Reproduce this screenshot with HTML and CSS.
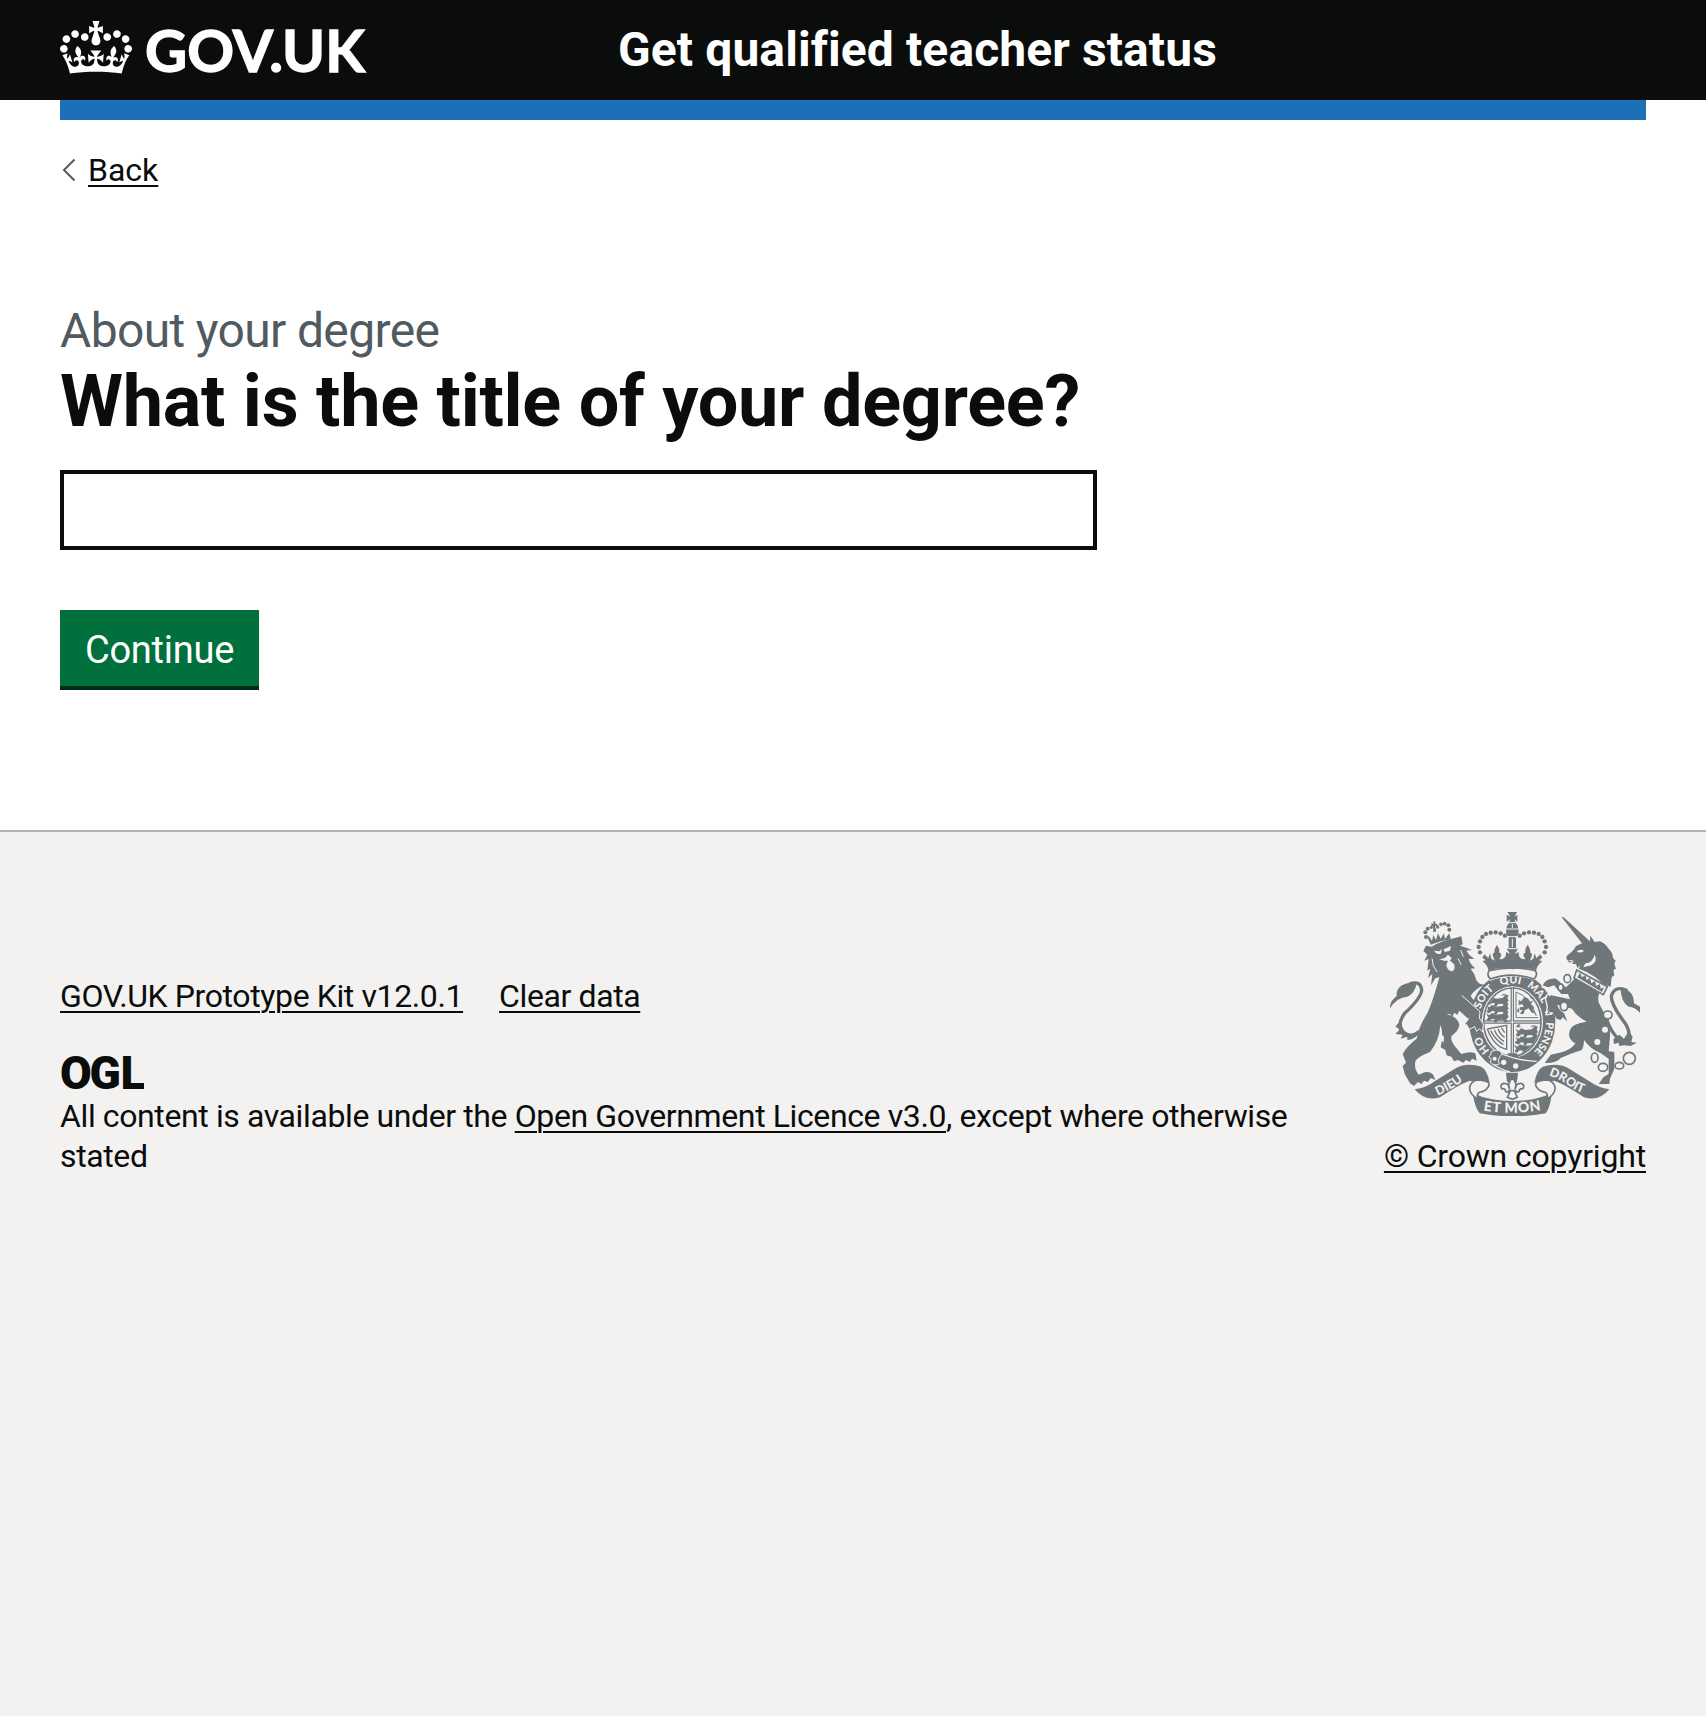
FILE: index.html
```html
<!DOCTYPE html>
<html lang="en">
<head>
<meta charset="utf-8">
<title>What is the title of your degree?</title>
<link rel="stylesheet" href="styles.css">
</head>
<body>
<header class="header">
  <div class="container header-inner">
    <a class="brand" href="#">
      <svg class="crown" viewBox="0 0 132 97" aria-hidden="true"><path fill="currentColor" fill-rule="evenodd" d="M25 30.2c3.5 1.5 7.7-.2 9.1-3.7 1.5-3.6-.2-7.8-3.9-9.2-3.6-1.4-7.6.3-9.1 3.9-1.4 3.5.3 7.5 3.9 9zM9 39.5c3.6 1.5 7.8-.2 9.2-3.7 1.5-3.6-.2-7.8-3.9-9.1-3.6-1.5-7.6.2-9.1 3.8-1.4 3.5.3 7.5 3.8 9zM4.4 57.2c3.5 1.5 7.7-.2 9.1-3.8 1.5-3.6-.2-7.7-3.9-9.1-3.5-1.5-7.6.3-9.1 3.8-1.4 3.5.3 7.6 3.9 9.1zm38.3-21.4c3.5 1.5 7.7-.2 9.1-3.8 1.5-3.6-.2-7.7-3.9-9.1-3.6-1.5-7.6.3-9.1 3.8-1.3 3.6.4 7.7 3.9 9.1zm64.4-5.6c-3.6 1.5-7.8-.2-9.1-3.7-1.5-3.6.2-7.8 3.8-9.2 3.6-1.4 7.7.3 9.2 3.9 1.3 3.5-.4 7.5-3.9 9zm15.9 9.3c-3.6 1.5-7.7-.2-9.1-3.7-1.5-3.6.2-7.8 3.7-9.1 3.6-1.5 7.7.2 9.2 3.8 1.5 3.5-.3 7.5-3.8 9zm4.7 17.7c-3.6 1.5-7.8-.2-9.2-3.8-1.5-3.6.2-7.7 3.9-9.1 3.6-1.5 7.7.3 9.2 3.8 1.3 3.5-.4 7.6-3.9 9.1zM89.3 35.8c-3.6 1.5-7.8-.2-9.2-3.8-1.4-3.6.2-7.7 3.9-9.1 3.6-1.5 7.7.3 9.2 3.8 1.4 3.6-.3 7.7-3.9 9.1zM69.7 17.7l8.9 4.7V9.3l-8.9 2.8c-.2-.3-.5-.6-.9-.9L72.4 0H59.6l3.5 11.2c-.3.3-.6.5-.9.9l-8.8-2.8v13.1l8.8-4.7c.3.3.6.7.9.9l-5 15.4v.1c-.2.8-.4 1.6-.4 2.4 0 4.1 3.1 7.5 7 8.1h.2c.3 0 .7.1 1 .1.4 0 .7 0 1-.1h.2c4-.6 7.1-4.1 7.1-8.1 0-.8-.1-1.7-.4-2.4V34l-5.1-15.4c.4-.2.7-.6 1-.9zM66 92.8c16.9 0 32.8 1.1 47.1 3.2 4-16.9 8.9-26.7 14-33.5l-9.6-3.4c1 4.9 1.1 7.2 0 10.2-1.5-1.4-3-4.3-4.2-8.7L108.6 76c2.8-2 5-3.2 7.5-3.3-4.4 9.4-10 11.9-13.6 11.2-4.3-.8-6.3-4.6-5.6-7.9 1-4.7 5.7-5.9 8-.5 4.3-8.7-3-11.4-7.6-8.8 7.1-7.2 7.9-13.5 2.1-21.1-8 6.1-8.1 12.3-4.5 20.8-4.7-5.4-12.1-2.5-9.5 6.2 3.4-5.2 7.9-2 7.2 3.1-.6 4.3-6.4 7.8-13.5 7.2-10.3-.9-10.9-8-11.2-13.8 2.5-.5 7.1 1.8 11 7.3L80.2 60c-4.1 4.4-8 5.3-12.3 5.4 1.4-4.4 8-11.6 8-11.6H55.5s6.4 7.2 7.9 11.6c-4.2-.1-8-1-12.3-5.4l1.4 16.4c3.9-5.5 8.5-7.7 10.9-7.3-.3 5.8-.9 12.8-11.1 13.8-7.2.6-12.9-2.9-13.5-7.2-.7-5 3.8-8.3 7.1-3.1 2.7-8.7-4.6-11.6-9.4-6.2 3.7-8.5 3.6-14.7-4.6-20.8-5.8 7.6-5 13.9 2.2 21.1-4.7-2.6-11.9.1-7.7 8.8 2.3-5.5 7.1-4.2 8.1.5.7 3.3-1.3 7.1-5.7 7.9-3.5.7-9-1.8-13.5-11.2 2.5.1 4.7 1.3 7.5 3.3l-4.7-15.4c-1.2 4.4-2.7 7.2-4.3 8.7-1.1-3-.9-5.3 0-10.2l-9.5 3.4c5 6.9 9.9 16.7 14 33.5 14.8-2.1 30.8-3.2 47.7-3.2z"/></svg>
      <span class="brand-text">GOV.UK</span>
    </a>
    <a class="service" href="#">Get qualified teacher status</a>
  </div>
</header>
<div class="container page">
  <div class="blue-bar"></div>
  <a class="back" href="#">
    <svg class="chevron" viewBox="0 0 14 24" aria-hidden="true"><path d="M12.500 1.500 2 12l10.500 10.500" fill="none" stroke="#505a5f" stroke-width="2"/></svg>
    <span class="link back-text">Back</span>
  </a>
  <main class="main">
    <span class="caption">About your degree</span>
    <h1 class="heading"><label for="degree">What is the title of your degree?</label></h1>
    <input class="input" id="degree" type="text">
    <button class="button" type="button">Continue</button>
  </main>
</div>
<footer class="footer">
  <div class="container footer-inner">
    <div class="meta">
      <div class="meta-links"><a class="link" href="#">GOV.UK Prototype Kit v12.0.1</a><a class="link" href="#">Clear data</a></div>
      <svg class="ogl" viewBox="0 0 84 36" role="img" aria-label="Open Government Licence"><text class="ogl-text" y="33" x="0 29.500 60.500">OGL</text></svg>
      <p class="licence">All content is available under the <a class="link" href="#">Open Government Licence v3.0</a>, except where otherwise stated</p>
    </div>
    <div class="crest">
      <svg class="arms" viewBox="60 66 750 612" aria-hidden="true">
        <defs>
          <clipPath id="shield"><ellipse cx="427" cy="396" rx="83" ry="99"/></clipPath>
          <path id="ring" d="M427 512A101 116 0 0 1 427 280A101 116 0 0 1 427 512"/>
          <path id="dieu" d="M203 617Q245 598 275 576T320 556"/>
          <path id="mon" d="M340 661Q426 676 520 659"/>
          <path id="droit" d="M536 556Q572 568 600 590T690 618"/>
          <path id="walker" d="M348 322l10 6 8-7 12 5 20-2 8-10 10 2-4 8 4 8-8 10 6 6-10 1-6-8-14 1-5 8-8-2 4-8-10-1-8 7-8-4 6-7zM350 318l4-8 10-2-4 6 6 4M392 318l8-6 12 1"/>
          <g id="halfcrown">
            <g class="f"><circle cx="330" cy="187" r="6.500"/><circle cx="326" cy="171" r="6.500"/><circle cx="330" cy="154" r="6.500"/><circle cx="337" cy="141" r="6.500"/><circle cx="348" cy="132" r="6.500"/><circle cx="362" cy="128" r="6.500"/><circle cx="377" cy="127" r="6.500"/><circle cx="392" cy="130" r="6.500"/><circle cx="405" cy="137" r="6.500"/></g>
            <path class="f" d="M343 193L355 204L360 190L364 206L374 212L368 196Q366 190 373 188Q372 176 381 164Q390 176 388 188Q396 190 393 198L388 208Q408 208 408 192L428 208V238Q390 230 355 241Q354 227 337 213L347 211L337 203Z"/>
          </g>
        </defs>
        <!-- lion -->
        <path class="f" d="M182 164L170 136L179 142L186 153L190 135L198 150L204 130L212 146L222 130L225 147L238 130L242 146V148Q212 152 182 164Z"/>
        <g class="f"><circle cx="168" cy="141" r="6"/><circle cx="166" cy="127" r="6"/><circle cx="173" cy="116" r="6"/><circle cx="184" cy="112" r="5"/><circle cx="203" cy="111" r="5"/><circle cx="213" cy="103" r="5.500"/><circle cx="224" cy="101" r="5.500"/><circle cx="235" cy="106" r="6"/><circle cx="238" cy="119" r="6"/><path d="M184 100L191 101L190 94L197 95L196 102L203 102L201 108L195 108L199 124L190 127L189 109L184 107Z"/></g>
        <path class="o" stroke-width="10" d="M148 424Q120 448 96 426Q80 404 104 370Q156 322 155 298Q150 270 118 282"/>
        <path class="f" d="M60 355Q58 335 80 318Q78 285 118 279L140 280Q134 312 112 320Q80 322 60 355ZM86 398L76 410L90 418L76 432L98 434L92 446L112 440L112 450Q140 448 150 424L126 432Q96 428 95 400Z"/>
        <path class="f" d="M160 183L168 167L185 170Q215 152 252 145L274 139L278 162L270 167Q290 172 306 180L289 182Q297 197 313 207L296 206Q301 224 316 235L302 236Q314 250 320 272L330 282L345 284Q315 295 302 318L336 366L332 384L340 400L338 426L328 416L320 424L314 410L298 418L292 404L284 402L296 388Q290 368 268 362L262 374L252 368L248 380L240 372L230 372Q266 382 268 406Q266 422 245 438Q240 448 254 468L274 492Q300 482 316 490L320 512L306 506L300 516L288 510L280 518L264 510L252 514L244 500L230 496L226 480L212 472Q222 430 211 405Q208 452 180 486Q140 502 136 514Q132 538 146 554L164 547Q190 542 196 570L182 564L174 576L162 572L154 582L144 576L132 588L120 580L104 552L98 528L108 518L98 492Q110 468 140 446Q146 410 172 370Q190 330 208 262L196 265L183 286L187 252L174 264L181 236L172 242L176 207L163 212L172 194Z"/>
        <path class="w" d="M192 182L208 184L216 176L212 192Q200 194 192 182ZM221 178L243 168L240 182L224 186ZM208 208L225 204L234 194L245 204L240 212L252 222Q258 240 245 244Q230 240 229 224L234 212L222 212ZM210 430L222 440L221 458L214 450Z"/>
        <path class="s" stroke-width="3" d="M186 205L190 228L202 246M272 180L280 200M264 205L274 225"/>
        <!-- garter and shield -->
        <ellipse class="f" cx="427" cy="396" rx="129" ry="150"/>
        <ellipse class="w" cx="427" cy="396" rx="92" ry="107"/>
        <ellipse class="o" cx="427" cy="396" rx="86" ry="102" stroke-width="5"/>
        <path class="o" stroke-width="10" d="M341 396h172M427 294v202"/>
        <path class="thinw" d="M343 396h168M427 296v198"/>
        <g class="f" clip-path="url(#shield)"><use href="#walker"/><use href="#walker" transform="translate(0 24)"/><use href="#walker" transform="translate(0 48)"/><use href="#walker" transform="translate(88 94)"/><use href="#walker" transform="translate(88 118)"/><use href="#walker" transform="translate(84 142)"/>
          <path d="M446 330l8 4 8-12 12 3 6 10 10-4-8 12 10 8-4 8 8 12-12-4-8-12-12 6-4 12-10-2 8-12-10 2 2-9 12-2-6-8-10 4zM446 352l-6 12 8 4-2-10zM478 320l10-6 4 10-8 4z"/></g>
        <path class="o" stroke-width="3" d="M438 306V383H504M438 306Q481 320 499 378"/>
        <path class="o" stroke-width="4" d="M352 417L410 406V478Q372 470 352 417M362 422Q376 450 400 464M373 420Q382 442 402 454M384 416Q390 434 404 442M394 413L404 428"/>
        <path class="f" d="M414 490H440L448 504H408Z"/>
        <text class="motto ring-t"><textPath href="#ring" startOffset="15%">HO</textPath></text>
        <text class="motto ring-t"><textPath href="#ring" startOffset="36%">SOIT</textPath></text>
        <text class="motto ring-t"><textPath href="#ring" startOffset="49.200%">QUI</textPath></text>
        <text class="motto ring-t"><textPath href="#ring" startOffset="61.600%">MAL</textPath></text>
        <text class="motto ring-t"><textPath href="#ring" startOffset="70.800%">Y</textPath></text>
        <text class="motto ring-t"><textPath href="#ring" startOffset="82.300%">PENSE</textPath></text>
        <path class="f" d="M372 482Q430 512 500 516Q470 540 430 545Q392 544 356 518Z"/>
        <path class="s" stroke-width="4" d="M384 486Q436 512 500 514M368 522Q390 538 420 546"/>
        <path class="badge" d="M364 484Q380 476 392 484Q400 494 390 500Q380 510 388 522Q374 530 360 516Q368 508 356 500Q364 498 364 484Z"/>
        <g class="w"><circle cx="374" cy="506" r="6"/><circle cx="401" cy="517" r="8"/><circle cx="437" cy="528" r="8"/></g>
        <path class="cut" d="M275 316L330 365L328 384L340 402L338 426L328 416L320 424L314 410L298 418L290 404L284 402L296 386L276 362Z"/>
        <path class="f" d="M250 310L274 312L296 388L270 364Z"/>
        <!-- royal crown -->
        <path class="w" d="M345 244L367 212H487L509 244L495 271Q427 247 359 273Z"/>
        <path class="wo" d="M357 242Q427 226 496 242Q505 254 492 267Q424 244 361 267Q349 257 357 242Z"/>
        <use href="#halfcrown"/><use href="#halfcrown" transform="matrix(-1 0 0 1 854 0)"/>
        <path class="f" d="M412 66H441L433 80L442 74V95L433 88L438 100Q446 108 446 122Q446 138 434 140L438 142V176H416V142L420 140Q408 138 408 122Q408 108 416 100L421 88L410 95V74L421 80ZM410 176H444L434 192L446 186V208L434 202L440 214H414L420 202L408 208V186L420 192Z"/>
        <path class="thinw" d="M408 117H446M412 98H442M427 102V114M412 140H442M427 146V172M415 176H439"/>
        <!-- unicorn -->
        <path class="o" stroke-width="10" d="M772 302Q735 284 724 318Q724 345 760 392Q788 428 770 456M706 376Q722 430 750 450"/>
        <path class="f" d="M752 294Q792 300 792 340L810 350V368Q794 350 776 350Q752 336 752 294ZM730 448L748 434L762 446L776 424L788 440L784 456L800 458L782 468L762 466L748 468L746 458L732 462Z"/>
        <path class="f" d="M574 80L581 82L652 147L660 154L661 137L674 156L690 154Q706 160 714 174Q728 186 729 204L737 212L733 222L738 236L730 240L733 256L725 262L722 290L700 282L676 262L650 246L626 236L632 226L622 234L618 222L606 222L612 214L598 218L588 204L592 196Q610 184 618 168L636 160Z"/>
        <path class="w" d="M620 184Q630 176 642 182Q632 192 620 184ZM646 220Q668 218 674 194Q684 214 664 226L640 232ZM611 211L594 211L604 215Z"/>
        <path class="f" d="M616 264L688 310Q680 330 690 346L704 372Q722 398 720 440L716 484L733 486V536L720 566L718 582H686L700 562L716 552V506L690 488Q662 478 642 450Q642 470 635 480Q604 490 572 504Q560 520 524 519L542 494Q600 486 616 460Q590 446 600 420Q606 400 650 395Q620 380 606 356L562 344Q564 358 582 370L592 394L578 382L572 390L560 386L546 364L534 370L538 350L532 322L544 316L600 328L594 312L574 312L552 286L534 292L518 286Q528 264 558 266L588 292Z"/>
        <path class="s" stroke-width="4" d="M514 290L534 298L550 292L566 312M532 312L526 326L532 350L528 374L546 372"/>
        <path class="wo" stroke-width="3" d="M620 240L712 290L700 314L612 264Z"/>
        <path class="f" d="M622 262L630 248L636 262L646 256L650 270L660 264L664 280L676 272L678 288L690 282L692 296L702 292L696 306Z"/>
        <g class="chain"><ellipse cx="592" cy="266" rx="10" ry="12"/><ellipse cx="572" cy="292" rx="8" ry="10"/><ellipse cx="582" cy="349" rx="11" ry="13"/><ellipse cx="713" cy="375" rx="13" ry="12"/><ellipse cx="674" cy="503" rx="10" ry="14"/><ellipse cx="699" cy="532" rx="14" ry="12"/><ellipse cx="748" cy="527" rx="13" ry="10"/><circle cx="778" cy="505" r="18"/></g>
        <g class="w"><circle cx="705" cy="419" r="9"/><circle cx="682" cy="456" r="9"/></g>
        <!-- ribbon -->
        <path class="f" d="M134 598Q168 594 194 574L252 538Q286 516 334 530Q352 540 359 578L323 570Q307 576 299 572Q262 586 210 622Q165 636 134 598ZM718 598Q686 594 658 574L600 538Q566 516 518 530Q500 540 493 578L529 570Q545 576 553 572Q590 586 642 622Q687 636 718 598Z"/>
        <path class="f" d="M308 609Q358 633 427 633T545 609Q542 650 527 670Q427 688 329 670Q314 652 308 609Z"/>
        <path class="wo" d="M322 570Q368 572 354 592Q344 606 330 606Q318 610 324 628Q296 612 299 590Q304 574 322 570ZM532 570Q486 572 500 592Q510 606 524 606Q536 610 530 628Q558 612 555 590Q550 574 532 570Z"/>
        <text class="motto"><textPath href="#dieu">DIEU</textPath></text>
        <text class="motto big"><textPath href="#mon" textLength="174">ET MON</textPath></text>
        <text class="motto"><textPath href="#droit">DROIT</textPath></text>
        <!-- plant badge -->
        <path class="f" d="M408 548H444L441 576H411Z"/>
        <path class="wo" d="M427 563Q410 583 419 597Q417 579 401 580Q388 584 395 596Q407 595 407 605L419 607L412 622L427 628L442 622L435 607L447 605Q447 595 459 596Q466 584 453 580Q437 579 435 597Q444 583 427 563ZM414 602H440"/>
      </svg>
      <a class="link copyright" href="#">© Crown copyright</a>
    </div>
  </div>
</footer>
</body>
</html>
```
FILE: styles.css
```css
* { box-sizing: border-box; }
html { background: #f3f2f1; }
body { margin: 0; font-family: Roboto, "Liberation Sans", sans-serif; font-size: 32px; line-height: 40px; color: #0b0c0c; background: #fff; }
a { color: inherit; text-decoration: none; }
.container { margin: 0 60px; }
.link { text-decoration: underline; text-decoration-thickness: 2px; text-underline-offset: 4px; }

.header { background: #0b0c0c; color: #fff; }
.header-inner { display: grid; grid-template-columns: 558px 1fr; align-items: center; height: 100px; }
.brand { display: flex; align-items: center; gap: 13px; }
.crown { display: block; width: 72px; height: 53px; margin-bottom: 5px; }
.brand-text { font: 700 58px/60px Lato, sans-serif; letter-spacing: 0.1px; -webkit-text-stroke: 1.300px #fff; }
.service { font-size: 48px; font-weight: 700; line-height: 60px; letter-spacing: 0.1px; }

.blue-bar { height: 20px; background: #1d70b8; }
.back { display: flex; align-items: center; gap: 12px; width: max-content; margin: 30px 0 0 2px; }
.chevron { display: block; width: 14px; height: 24px; }
.main { display: flex; flex-direction: column; align-items: flex-start; padding: 111px 0 140px; }
.caption { font-size: 48px; line-height: 60px; color: #505a5f; letter-spacing: -0.65px; }
.heading { margin: 0 0 28px; padding-top: 1px; font-size: 72px; font-weight: 700; line-height: 80px; letter-spacing: -0.25px; }
.input { width: 1037px; height: 80px; padding: 10px; border: 4px solid #0b0c0c; border-radius: 0; background: #fff; font: inherit; }
.button { width: 199px; height: 80px; margin-top: 60px; padding: 3px 0 0; border: 0; border-bottom: 4px solid #002d18; background: #00703c; color: #fff; font: 400 38px/38px Roboto, sans-serif; letter-spacing: -0.25px; }

.footer { border-top: 2px solid #b1b4b6; background: #f3f2f1; min-height: 886px; padding-top: 80px; }
.footer-inner { display: flex; justify-content: space-between; align-items: flex-end; }
.meta { width: 1260px; letter-spacing: -0.39px; }
.meta-links { display: flex; gap: 36px; }
.ogl { display: block; width: 84px; height: 36px; margin: 40px 0 4px; }
.ogl-text { font: 900 46px Roboto, sans-serif; letter-spacing: 0; fill: #0b0c0c; }
.licence { margin: 0; }
.crest { display: flex; flex-direction: column; align-items: flex-end; }
.arms { display: block; width: 250px; height: 204px; margin: 0 6px 20px 0; }
.copyright { letter-spacing: -0.17px; }

.f { fill: #6f777b; }
.w { fill: #f3f2f1; }
.s { fill: none; stroke: #f3f2f1; }
.o { fill: none; stroke: #6f777b; }
.thinw { fill: none; stroke: #f3f2f1; stroke-width: 3; }
.wo { fill: #f3f2f1; stroke: #6f777b; stroke-width: 5; }
.badge { fill: #6f777b; stroke: #f3f2f1; stroke-width: 3; }
.cut { fill: #6f777b; stroke: #f3f2f1; stroke-width: 3; }
.chain { fill: #f3f2f1; stroke: #6f777b; stroke-width: 5; }
.motto { font: 900 37px Lato, sans-serif; fill: #f3f2f1; }
.ring-t { font-size: 32px; text-anchor: middle; }
.big { font-size: 42px; }
```
